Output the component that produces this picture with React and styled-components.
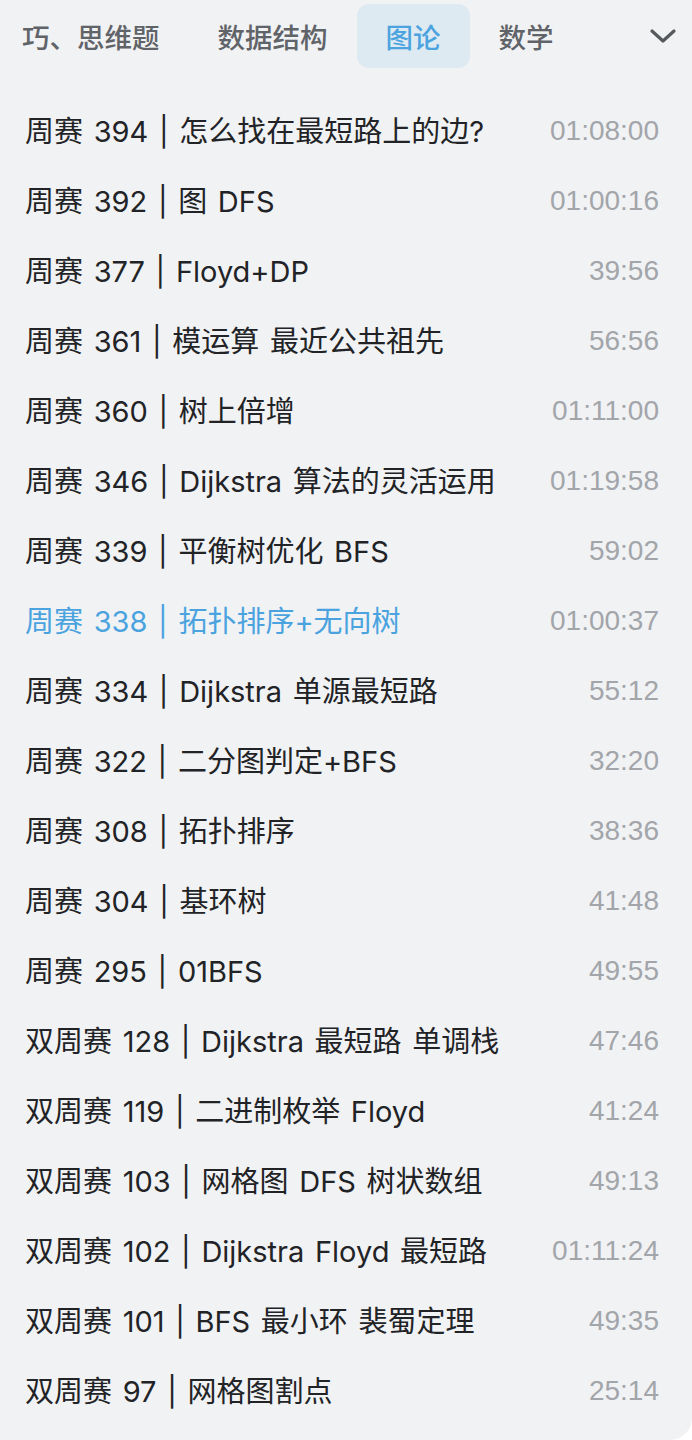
import styled, { createGlobalStyle } from 'styled-components'

const GlobalStyle = createGlobalStyle`
  html, body {
    margin: 0;
    padding: 0;
    background: #ffffff;
  }
  body {
    font-family: 'Inter', 'Noto Sans CJK SC', sans-serif;
  }
`

const Panel = styled.div`
  width: 692px;
  height: 1440px;
  background: #f1f2f4;
  border-bottom-right-radius: 22px;
  overflow: hidden;
  box-sizing: border-box;
`

const TabBar = styled.nav`
  display: flex;
  align-items: center;
  height: 72px;
`

const Tab = styled.div`
  height: 64px;
  display: flex;
  align-items: center;
  padding: 0 29px;
  border-radius: 12px;
  font-family: 'Noto Sans CJK SC', sans-serif;
  font-size: 27.5px;
  font-weight: 500;
  white-space: nowrap;
  color: ${(p) => (p.$active ? '#4ba3df' : '#606368')};
  background: ${(p) => (p.$active ? '#deeaf2' : 'transparent')};

  &:first-child {
    padding-left: 22px;
  }
`

const Chevron = styled.div`
  margin-left: auto;
  margin-right: 14px;
  width: 30px;
  height: 30px;
  display: flex;
  align-items: center;
  justify-content: center;
  color: #55585c;
`

const List = styled.ul`
  list-style: none;
  margin: 0;
  padding: 22px 33px 0 25px;
`

const Row = styled.li`
  height: 70px;
  display: flex;
  align-items: center;
  justify-content: space-between;
  font-size: 28px;
  color: ${(p) => (p.$active ? '#4aa3df' : '#222326')};
`

const Title = styled.span`
  font-family: 'Inter', 'Noto Sans CJK SC', sans-serif;
  font-size: 29px;
  word-spacing: 2.5px;
  white-space: nowrap;
`

const Duration = styled.span`
  font-family: 'Liberation Sans', sans-serif;
  color: #a2a5aa;
  padding-top: 4px;
  white-space: nowrap;
`

const TABS = ['巧、思维题', '数据结构', '图论', '数学']

const ITEMS = [
  ['周赛 394 | 怎么找在最短路上的边?', '01:08:00'],
  ['周赛 392 | 图 DFS', '01:00:16'],
  ['周赛 377 | Floyd+DP', '39:56'],
  ['周赛 361 | 模运算 最近公共祖先', '56:56'],
  ['周赛 360 | 树上倍增', '01:11:00'],
  ['周赛 346 | Dijkstra 算法的灵活运用', '01:19:58'],
  ['周赛 339 | 平衡树优化 BFS', '59:02'],
  ['周赛 338 | 拓扑排序+无向树', '01:00:37', true],
  ['周赛 334 | Dijkstra 单源最短路', '55:12'],
  ['周赛 322 | 二分图判定+BFS', '32:20'],
  ['周赛 308 | 拓扑排序', '38:36'],
  ['周赛 304 | 基环树', '41:48'],
  ['周赛 295 | 01BFS', '49:55'],
  ['双周赛 128 | Dijkstra 最短路 单调栈', '47:46'],
  ['双周赛 119 | 二进制枚举 Floyd', '41:24'],
  ['双周赛 103 | 网格图 DFS 树状数组', '49:13'],
  ['双周赛 102 | Dijkstra Floyd 最短路', '01:11:24'],
  ['双周赛 101 | BFS 最小环 裴蜀定理', '49:35'],
  ['双周赛 97 | 网格图割点', '25:14'],
]

export default function App() {
  return (
    <>
      <GlobalStyle />
      <Panel>
        <TabBar>
          {TABS.map((t) => (
            <Tab key={t} $active={t === '图论'}>
              {t}
            </Tab>
          ))}
          <Chevron>
            <svg width="28" height="18" viewBox="0 0 28 18" fill="none">
              <path
                d="M3 4 L14 14 L25 4"
                stroke="currentColor"
                strokeWidth="3.2"
                strokeLinecap="round"
                strokeLinejoin="round"
              />
            </svg>
          </Chevron>
        </TabBar>
        <List>
          {ITEMS.map(([title, time, active]) => (
            <Row key={title} $active={active}>
              <Title>{title}</Title>
              <Duration>{time}</Duration>
            </Row>
          ))}
        </List>
      </Panel>
    </>
  )
}
